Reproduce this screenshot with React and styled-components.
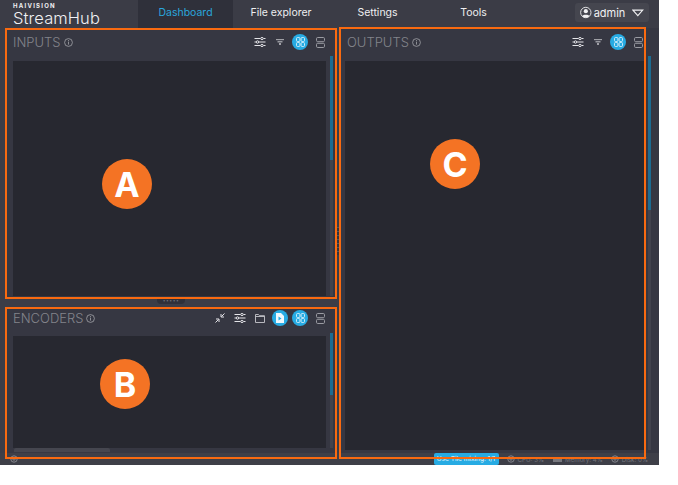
import React from 'react';
import styled, { createGlobalStyle } from 'styled-components';

const GlobalStyle = createGlobalStyle`
  html, body {
    margin: 0;
    padding: 0;
    background: #fff;
  }
  * {
    box-sizing: border-box;
  }
`;

const Shell = styled.div`
  width: 659px;
  height: 465px;
  display: flex;
  flex-direction: column;
  background: #3c3d47;
  font-family: Inter, "Liberation Sans", sans-serif;
  overflow: visible;
`;

const TopBar = styled.header`
  height: 28px;
  display: flex;
  align-items: stretch;
  background: #3b3c46;
  padding-left: 13px;
`;

const Logo = styled.div`
  width: 125px;
  display: flex;
  flex-direction: column;
  color: #f1f1f3;
`;

const LogoBrand = styled.span`
  font-size: 6px;
  font-weight: 700;
  letter-spacing: 1.25px;
  line-height: 6px;
  margin-top: 3px;
`;

const LogoName = styled.span`
  font-size: 16.5px;
  font-weight: 300;
  line-height: 17px;
  letter-spacing: 0.1px;
  margin-top: 1px;
`;

const NavTab = styled.div`
  width: ${p => p.$width}px;
  display: flex;
  align-items: center;
  justify-content: center;
  padding-bottom: 3px;
  font-size: 10.5px;
  color: ${p => (p.$active ? '#2aa6dc' : '#eeeef0')};
  background: ${p => (p.$active ? '#2f303a' : 'transparent')};
`;

const UserBox = styled.div`
  margin: 3px 10px 3px auto;
  width: 74px;
  height: 19px;
  padding: 0 5px;
  display: flex;
  align-items: center;
  gap: 2px;
  border-radius: 3px;
  background: #45464f;
  color: #f0f0f2;
  font-size: 11px;
`;

const Main = styled.main`
  height: 425px;
  display: flex;
  padding-left: 5px;
`;

const LeftColumn = styled.div`
  width: 332px;
  display: flex;
  flex-direction: column;
`;

const Panel = styled.section`
  position: relative;
  flex: ${p => (p.$grow ? '1' : 'none')};
  height: ${p => (p.$height ? `${p.$height}px` : 'auto')};
  display: flex;
  flex-direction: column;
  padding: 0 ${p => p.$right}px 0 8px;
  background: #363742;
`;

const PanelHead = styled.div`
  height: ${p => p.$height}px;
  flex: none;
  display: flex;
  align-items: center;
  padding-bottom: ${p => p.$lift}px;
  margin-right: -4px;
`;

const PanelTitle = styled.h2`
  margin: 0;
  font-size: 13px;
  font-weight: 300;
  color: #83848b;
`;

const InfoMark = styled.span`
  margin-left: 3px;
  display: flex;
  color: #a3a4aa;
`;

const Tools = styled.div`
  margin-left: auto;
  display: flex;
  align-items: center;
`;

const Tool = styled.span`
  width: 20px;
  height: 20px;
  display: flex;
  align-items: center;
  justify-content: center;
  color: ${p => (p.$dim ? '#9a9ba2' : '#e4e4e8')};
`;

const ToolOn = styled.span`
  width: 16px;
  height: 16px;
  margin: 0 2px;
  display: flex;
  align-items: center;
  justify-content: center;
  border-radius: 50%;
  background: #27abe3;
  color: #d9f0fa;
`;

const ListArea = styled.div`
  flex: 1;
  background: #272830;
  margin-left: ${p => p.$left || 0}px;
  margin-bottom: ${p => p.$bottom}px;
`;

const ScrollTrack = styled.div`
  position: absolute;
  top: ${p => p.$top}px;
  bottom: ${p => p.$bottom}px;
  right: ${p => p.$right}px;
  width: 3px;
  background: #42434d;
`;

const ScrollThumb = styled.div`
  height: ${p => p.$height}px;
  background: #1c6c92;
`;

const StrayTab = styled.div`
  position: absolute;
  left: 9px;
  bottom: 1px;
  width: 96px;
  height: 4px;
  background: #45464f;
  border-radius: 2px 2px 0 0;
`;

const RowGrip = styled.div`
  height: 8px;
  flex: none;
  display: flex;
  justify-content: center;
  background: #3c3d47;
`;

const GripTab = styled.div`
  width: 28px;
  height: 5px;
  background: #2f303a;
  border-radius: 0 0 4px 4px;
  color: #6d6e76;
  font-size: 5px;
  line-height: 3px;
  text-align: center;
  letter-spacing: 0.5px;
`;

const ColumnGrip = styled.div`
  width: 2px;
  flex: none;
  display: flex;
  align-items: center;
  background: #3c3d47;
`;

const GripDots = styled.div`
  width: 2px;
  height: 28px;
  background: repeating-linear-gradient(#55565e 0 1px, #33343e 1px 4px);
`;

const RightPanelWrap = styled.div`
  flex: 1;
  display: flex;
  flex-direction: column;
`;

const Frame = styled.div`
  position: absolute;
  top: ${p => p.$top}px;
  left: 0;
  right: ${p => p.$right}px;
  bottom: ${p => p.$bottom}px;
  border: 2px solid #f96a10;
  pointer-events: none;
  z-index: 2;
`;

const Callout = styled.div`
  position: absolute;
  left: ${p => p.$x}px;
  top: ${p => p.$y}px;
  width: 50px;
  height: 50px;
  display: flex;
  align-items: center;
  justify-content: center;
  border-radius: 50%;
  background: #f47324;
  color: #fff;
  font-family: Inter, "Liberation Sans", sans-serif;
  font-size: 34px;
  font-weight: 700;
  z-index: 3;
`;

const Footer = styled.footer`
  height: 12px;
  display: flex;
  align-items: center;
  padding: 0 11px 0 10px;
  background: #3e3f48;
  color: #74757c;
  font-size: 6.2px;
`;

const FooterButton = styled.div`
  margin-left: auto;
  width: 65px;
  height: 12px;
  border-radius: 2px;
  background: #27abe3;
  color: #eaf7fd;
  font-size: 6.5px;
  line-height: 12px;
  text-align: center;
  white-space: nowrap;
  overflow: hidden;
`;

const Stat = styled.span`
  margin-left: ${p => p.$gap}px;
  display: flex;
  align-items: center;
  gap: 3px;
  white-space: nowrap;
`;

const Sliders = () => (
  <svg width="12" height="10" viewBox="0 0 12 10" fill="none" stroke="currentColor" strokeWidth="1">
    <path d="M0.5 1.5h6M9.5 1.5h2M0.5 5h1.5M5 5h6.5M0.5 8.5h6M9.5 8.5h2" />
    <circle cx="8" cy="1.5" r="1.2" />
    <circle cx="3.5" cy="5" r="1.2" />
    <circle cx="8" cy="8.5" r="1.2" />
  </svg>
);

const Filter = () => (
  <svg width="8" height="6" viewBox="0 0 8 6" fill="currentColor">
    <rect x="0" y="0" width="8" height="1.2" opacity="0.6" />
    <rect x="1.5" y="2.2" width="5" height="1.2" opacity="0.7" />
    <rect x="3" y="4.4" width="2" height="1.2" />
  </svg>
);

const Grid = () => (
  <svg width="9" height="10" viewBox="0 0 9 10" fill="none" stroke="currentColor" strokeWidth="0.9">
    <rect x="0.5" y="0.5" width="3.4" height="4" rx="1" />
    <rect x="5.1" y="0.5" width="3.4" height="4" rx="1" />
    <rect x="0.5" y="5.5" width="3.4" height="4" rx="1" />
    <rect x="5.1" y="5.5" width="3.4" height="4" rx="1" />
  </svg>
);

const Stack = () => (
  <svg width="9" height="11" viewBox="0 0 9 11" fill="none" stroke="currentColor" strokeWidth="1">
    <rect x="0.5" y="0.5" width="8" height="4.2" rx="1.2" />
    <rect x="0.5" y="6.3" width="8" height="4.2" rx="1.2" />
  </svg>
);

const Compress = () => (
  <svg width="10" height="10" viewBox="0 0 10 10" fill="none" stroke="currentColor" strokeWidth="1">
    <path d="M9.5 0.5L6.5 3.5M6 1v3h3M0.5 9.5L3.5 6.5M1 6h3v3" />
  </svg>
);

const Folder = () => (
  <svg width="10" height="9" viewBox="0 0 10 9" fill="none" stroke="currentColor" strokeWidth="1" opacity="0.75">
    <path d="M0.5 8.5V0.5h3l1 1.2h5v6.8z" />
    <path d="M0.5 2.5h9" />
  </svg>
);

const FilePlay = () => (
  <svg width="8" height="10" viewBox="0 0 8 10" fill="#eef9fe">
    <path d="M0 0h5l3 3v7H0z" />
    <path d="M2.5 3.5L5.5 5.5L2.5 7.5z" fill="#27abe3" />
  </svg>
);

const Info = () => (
  <svg width="9" height="9" viewBox="0 0 9 9" fill="none" stroke="currentColor" strokeWidth="0.8">
    <circle cx="4.5" cy="4.5" r="3.9" />
    <path d="M4.5 3.6v3M4.5 2v0.9" />
  </svg>
);

const UserIcon = () => (
  <svg width="13" height="13" viewBox="0 0 13 13">
    <circle cx="6.5" cy="6.5" r="5.8" fill="none" stroke="#f0f0f2" strokeWidth="1" />
    <circle cx="6.5" cy="5" r="2.3" fill="#f0f0f2" />
    <path d="M2.6 10.6C3.5 8.6 9.5 8.6 10.4 10.6C9 12.4 4 12.4 2.6 10.6z" fill="#f0f0f2" />
  </svg>
);

const Caret = () => (
  <svg width="13" height="8" viewBox="0 0 13 8" fill="none" stroke="#f0f0f2" strokeWidth="1.2" style={{ marginLeft: 5 }}>
    <path d="M1 0.8h11L6.5 7z" />
  </svg>
);

const Gear = () => (
  <svg width="8" height="8" viewBox="0 0 8 8" fill="none" stroke="#8b8c93" strokeWidth="0.9">
    <circle cx="4" cy="4" r="3.2" />
    <circle cx="4" cy="4" r="1.2" />
  </svg>
);

const MemoryBar = () => (
  <svg width="9" height="5" viewBox="0 0 9 5" fill="#77787f">
    <rect width="9" height="5" />
  </svg>
);

const App = () => (
  <Shell>
    <GlobalStyle />
    <TopBar>
      <Logo>
        <LogoBrand>HAIVISION</LogoBrand>
        <LogoName>StreamHub</LogoName>
      </Logo>
      <NavTab $active $width={95}>Dashboard</NavTab>
      <NavTab $width={96}>File explorer</NavTab>
      <NavTab $width={97}>Settings</NavTab>
      <NavTab $width={95}>Tools</NavTab>
      <UserBox>
        <UserIcon />
        admin
        <Caret />
      </UserBox>
    </TopBar>
    <Main>
      <LeftColumn>
        <Panel $height={271} $right={11}>
          <PanelHead $height={33} $lift={5}>
            <PanelTitle>INPUTS</PanelTitle>
            <InfoMark><Info /></InfoMark>
            <Tools>
              <Tool><Sliders /></Tool>
              <Tool><Filter /></Tool>
              <ToolOn><Grid /></ToolOn>
              <Tool $dim><Stack /></Tool>
            </Tools>
          </PanelHead>
          <ListArea $bottom={3} />
          <ScrollTrack $top={28} $bottom={3} $right={4}>
            <ScrollThumb $height={104} />
          </ScrollTrack>
          <Frame $top={0} $right={0} $bottom={0} />
        </Panel>
        <RowGrip>
          <GripTab>•••••</GripTab>
        </RowGrip>
        <Panel $grow $right={11}>
          <PanelHead $height={29} $lift={7}>
            <PanelTitle>ENCODERS</PanelTitle>
            <InfoMark><Info /></InfoMark>
            <Tools>
              <Tool><Compress /></Tool>
              <Tool><Sliders /></Tool>
              <Tool><Folder /></Tool>
              <ToolOn><FilePlay /></ToolOn>
              <ToolOn><Grid /></ToolOn>
              <Tool $dim><Stack /></Tool>
            </Tools>
          </PanelHead>
          <ListArea $bottom={5} />
          <StrayTab />
          <ScrollTrack $top={26} $bottom={5} $right={4}>
            <ScrollThumb $height={62} />
          </ScrollTrack>
          <Frame $top={0} $right={0} $bottom={-6} />
        </Panel>
      </LeftColumn>
      <ColumnGrip>
        <GripDots />
      </ColumnGrip>
      <RightPanelWrap>
        <Panel $grow $right={15}>
          <PanelHead $height={33} $lift={5}>
            <PanelTitle>OUTPUTS</PanelTitle>
            <InfoMark><Info /></InfoMark>
            <Tools>
              <Tool><Sliders /></Tool>
              <Tool><Filter /></Tool>
              <ToolOn><Grid /></ToolOn>
              <Tool $dim><Stack /></Tool>
            </Tools>
          </PanelHead>
          <ListArea $left={-2} $bottom={3} />
          <ScrollTrack $top={28} $bottom={3} $right={8}>
            <ScrollThumb $height={154} />
          </ScrollTrack>
          <Frame $top={-1} $right={13} $bottom={-6} />
        </Panel>
      </RightPanelWrap>
    </Main>
    <Footer>
      <Gear />
      <FooterButton>Use Tile mixing: 1/1</FooterButton>
      <Stat $gap={8}><Gear /> CPU: 3%</Stat>
      <Stat $gap={9}><MemoryBar /> Memory: 4%</Stat>
      <Stat $gap={8}><Gear /> Disk: 0%</Stat>
    </Footer>
    <Callout $x={102} $y={159}>A</Callout>
    <Callout $x={100} $y={359}>B</Callout>
    <Callout $x={430} $y={139}>C</Callout>
  </Shell>
);

export default App;
